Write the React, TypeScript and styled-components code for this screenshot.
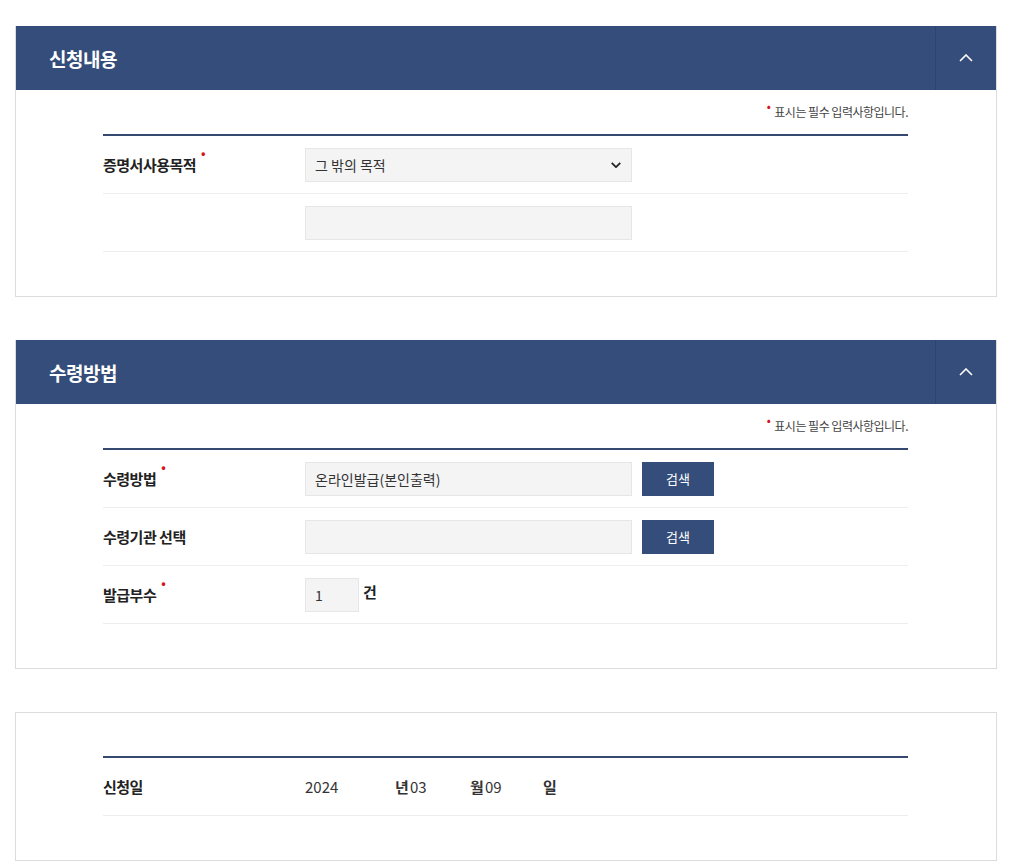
import React from "react";
import styled, { createGlobalStyle } from "styled-components";

const Global = createGlobalStyle`
  body {
    margin: 0;
    background: #fff;
    font-family: "Noto Sans CJK KR", "Noto Sans", sans-serif;
    color: #222;
  }
`;

const Page = styled.div`
  padding: 26px 27px 10px 15px;
  display: flex;
  flex-direction: column;
  gap: 43px;
`;

const Panel = styled.section<{ $boxed?: boolean }>`
  border: 1px solid #dcdcdc;
  border-top: ${(p) => (p.$boxed ? "1px solid #dcdcdc" : "none")};
`;

const Header = styled.div`
  height: 64px;
  background: #344d7a;
  display: flex;
  align-items: center;
  justify-content: space-between;
  color: #fff;
  h2 {
    margin: 0 0 0 33px;
    font-size: 19px;
    font-weight: 700;
    letter-spacing: -0.5px;
  }
`;

const Toggle = styled.div`
  width: 60px;
  height: 100%;
  border-left: 1px solid #2d4470;
  display: flex;
  align-items: center;
  justify-content: center;
`;

const Body = styled.div<{ $top: number }>`
  padding: ${(p) => p.$top}px 88px 44px 87px;
`;

const Notice = styled.div`
  text-align: right;
  font-size: 12px;
  color: #444;
  letter-spacing: -0.5px;
  height: 44px;
  padding-top: 15px;
  box-sizing: border-box;
  line-height: 14px;
  .dot {
    color: #d8141c;
    position: relative;
    top: -6px;
    margin-right: 4px;
  }
`;

const Table = styled.div`
  border-top: 2px solid #344870;
`;

const Row = styled.div`
  display: flex;
  align-items: center;
  height: 57px;
  border-bottom: 1px solid #eee;
`;

const Label = styled.div<{ $req?: boolean }>`
  width: 202px;
  font-size: 15px;
  font-weight: 700;
  color: #222;
  letter-spacing: -0.5px;
  span {
    position: relative;
  }
  span::after {
    content: ${(p) => (p.$req ? '"•"' : '""')};
    color: #d8141c;
    position: absolute;
    right: -9px;
    top: -10px;
    font-size: 12px;
  }
`;

const Field = styled.div<{ $w?: number }>`
  width: ${(p) => p.$w ?? 327}px;
  height: 34px;
  box-sizing: border-box;
  background: #f4f4f4;
  border: 1px solid #e6e6e6;
  display: flex;
  align-items: center;
  justify-content: space-between;
  padding: 0 10px 0 9px;
  font-size: 14px;
  color: #333;
`;

const Button = styled.button`
  margin-left: 10px;
  width: 72px;
  height: 34px;
  border: none;
  background: #344d7a;
  color: #fff;
  font-family: inherit;
  font-size: 13px;
`;

const Unit = styled.span`
  margin-left: 4px;
  font-size: 15px;
  font-weight: 700;
  position: relative;
  top: -3px;
`;

const DateText = styled.span<{ $w: number; $bold?: boolean }>`
  width: ${(p) => p.$w}px;
  font-size: 15px;
  font-weight: ${(p) => (p.$bold ? 700 : 400)};
  color: #333;
`;

const Chevron = ({ down }: { down?: boolean }) => (
  <svg width={down ? 10 : 14} height={down ? 6 : 8} viewBox="0 0 14 8" fill="none">
    <path
      d={down ? "M1 1l6 6 6-6" : "M1 7l6-6 6 6"}
      stroke={down ? "#222" : "#fff"}
      strokeWidth={down ? 2.4 : 1.6}
    />
  </svg>
);

const Req = ({ children }: { children: React.ReactNode }) => (
  <Label $req>
    <span>{children}</span>
  </Label>
);

const PanelHeader = ({ title }: { title: string }) => (
  <Header>
    <h2>{title}</h2>
    <Toggle>
      <Chevron />
    </Toggle>
  </Header>
);

const RequiredNotice = () => (
  <Notice>
    <span className="dot">•</span>표시는 필수 입력사항입니다.
  </Notice>
);

export default function App() {
  return (
    <>
      <Global />
      <Page>
        <Panel>
          <PanelHeader title="신청내용" />
          <Body $top={0}>
            <RequiredNotice />
            <Table>
              <Row>
                <Req>증명서사용목적</Req>
                <Field>
                  그 밖의 목적
                  <Chevron down />
                </Field>
              </Row>
              <Row>
                <Label />
                <Field />
              </Row>
            </Table>
          </Body>
        </Panel>

        <Panel>
          <PanelHeader title="수령방법" />
          <Body $top={0}>
            <RequiredNotice />
            <Table>
              <Row>
                <Req>수령방법</Req>
                <Field>온라인발급(본인출력)</Field>
                <Button>검색</Button>
              </Row>
              <Row>
                <Label>수령기관 선택</Label>
                <Field />
                <Button>검색</Button>
              </Row>
              <Row>
                <Req>발급부수</Req>
                <Field $w={54}>1</Field>
                <Unit>건</Unit>
              </Row>
            </Table>
          </Body>
        </Panel>

        <Panel $boxed>
          <Body $top={43}>
            <Table>
              <Row>
                <Label>신청일</Label>
                <DateText $w={90}>2024</DateText>
                <DateText $w={15} $bold>년</DateText>
                <DateText $w={60}>03</DateText>
                <DateText $w={15} $bold>월</DateText>
                <DateText $w={58}>09</DateText>
                <DateText $w={20} $bold>일</DateText>
              </Row>
            </Table>
          </Body>
        </Panel>
      </Page>
    </>
  );
}
